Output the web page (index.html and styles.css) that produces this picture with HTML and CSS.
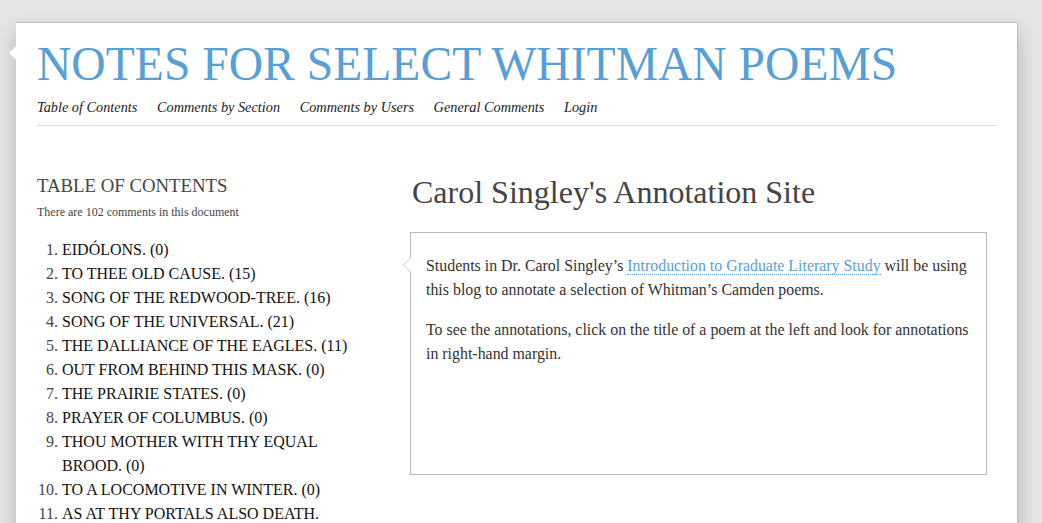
FILE: index.html
```html
<!DOCTYPE html>
<html>
<head>
<meta charset="utf-8">
<link rel="stylesheet" href="styles.css">
</head>
<body>
<div class="page">
  <span class="page-notch"></span>
  <header class="site-header">
    <h1 class="site-title">NOTES FOR SELECT WHITMAN POEMS</h1>
    <nav class="site-nav">
      <a href="#">Table of Contents</a>
      <a href="#">Comments by Section</a>
      <a href="#">Comments by Users</a>
      <a href="#">General Comments</a>
      <a href="#">Login</a>
    </nav>
  </header>
  <div class="main">
    <aside class="toc">
      <h2 class="toc-title">TABLE OF CONTENTS</h2>
      <p class="toc-count">There are 102 comments in this document</p>
      <ol class="toc-list">
        <li>EIDÓLONS. (0)</li>
        <li>TO THEE OLD CAUSE. (15)</li>
        <li>SONG OF THE REDWOOD-TREE. (16)</li>
        <li>SONG OF THE UNIVERSAL. (21)</li>
        <li>THE DALLIANCE OF THE EAGLES. (11)</li>
        <li>OUT FROM BEHIND THIS MASK. (0)</li>
        <li>THE PRAIRIE STATES. (0)</li>
        <li>PRAYER OF COLUMBUS. (0)</li>
        <li>THOU MOTHER WITH THY EQUAL BROOD. (0)</li>
        <li>TO A LOCOMOTIVE IN WINTER. (0)</li>
        <li>AS AT THY PORTALS ALSO DEATH.<br>(0)</li>
      </ol>
    </aside>
    <section class="content">
      <h2 class="content-title">Carol Singley's Annotation Site</h2>
      <div class="intro-box">
        <span class="box-notch"></span>
        <p>Students in Dr. Carol Singley’s <a href="#" class="dotted">Introduction to Graduate Literary Study</a> will be using this blog to annotate a selection of Whitman’s Camden poems.</p>
        <p>To see the annotations, click on the title of a poem at the left and look for annotations in right-hand margin.</p>
      </div>
    </section>
  </div>
</div>
</body>
</html>
```
FILE: styles.css
```css
html, body {
  margin: 0;
  padding: 0;
}
body {
  background: #e5e5e5;
  font-family: "Liberation Serif", "Times New Roman", serif;
  color: #333;
  height: 523px;
  overflow: hidden;
}
.page {
  position: relative;
  margin: 22px 0 0 16px;
  width: 960px;
  min-height: 600px;
  background: #fff;
  border-top: 1px solid #bbb;
  border-right: 1px solid #bbb;
  padding: 0 20px 0 21px;
  box-shadow: 0 10px 18px rgba(0, 0, 0, 0.22);
}
.page-notch {
  position: absolute;
  left: -7px;
  top: 23px;
  width: 0;
  height: 0;
  border-top: 7px solid transparent;
  border-bottom: 7px solid transparent;
  border-right: 7px solid #fff;
}
.site-header {
  border-bottom: 1px solid #ddd;
  padding-top: 14px;
}
.site-title {
  margin: 0;
  font-weight: normal;
  font-size: 47.6px;
  line-height: 55px;
  color: #5a9fd4;
  letter-spacing: 0;
}
.site-nav {
  display: flex;
  gap: 19.6px;
  padding: 5px 0 8px;
}
.site-nav a {
  font-style: italic;
  font-size: 14.3px;
  line-height: 20px;
  color: #222;
  text-decoration: none;
}
.main {
  display: flex;
  gap: 33px;
  padding-top: 40px;
}
.toc {
  width: 340px;
  flex: none;
}
.toc-title {
  margin: 8px 0 0;
  font-weight: normal;
  font-size: 18.8px;
  line-height: 24px;
  color: #444;
}
.toc-count {
  margin: 6px 0 18px;
  font-size: 12px;
  line-height: 16px;
  color: #444;
}
.toc-list {
  margin: 0;
  padding-left: 25px;
  width: 290px;
  font-size: 16px;
  line-height: 24px;
  color: #111;
}
.toc-list li::marker {
  color: #444;
}
.content {
  width: 577px;
  flex: none;
}
.content-title {
  margin: 0 0 0 2px;
  font-weight: normal;
  font-size: 32px;
  line-height: 52px;
  color: #444;
}
.intro-box {
  position: relative;
  margin-top: 14px;
  border: 1px solid #bbb;
  height: 211px;
  padding: 21px 8px 9px 15px;
}
.box-notch {
  position: absolute;
  left: -8px;
  top: 24px;
  width: 0;
  height: 0;
  border-top: 8px solid transparent;
  border-bottom: 8px solid transparent;
  border-right: 8px solid #ccc;
}
.box-notch::after {
  content: "";
  position: absolute;
  left: 1px;
  top: -7px;
  border-top: 7px solid transparent;
  border-bottom: 7px solid transparent;
  border-right: 7px solid #fff;
}
.intro-box p {
  margin: 0 0 16px;
  font-size: 15.9px;
  line-height: 24px;
  color: #333;
}
.dotted {
  color: #5a9fd4;
  text-decoration: none;
  border-bottom: 1px dotted #5a9fd4;
}
```
